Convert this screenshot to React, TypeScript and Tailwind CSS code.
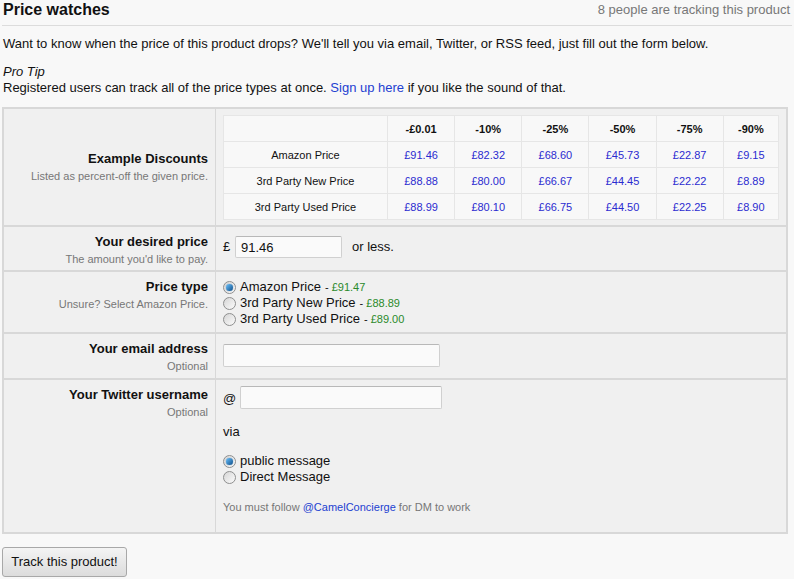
import React from "react";

const columns = ["-£0.01", "-10%", "-25%", "-50%", "-75%", "-90%"];

const discounts = [
  { name: "Amazon Price", prices: ["£91.46", "£82.32", "£68.60", "£45.73", "£22.87", "£9.15"] },
  { name: "3rd Party New Price", prices: ["£88.88", "£80.00", "£66.67", "£44.45", "£22.22", "£8.89"] },
  { name: "3rd Party Used Price", prices: ["£88.99", "£80.10", "£66.75", "£44.50", "£22.25", "£8.90"] },
];

function Radio({ checked }: { checked?: boolean }) {
  return (
    <span className="mr-[4px] inline-flex h-[13px] w-[13px] shrink-0 items-center justify-center rounded-full border border-[#8e8f8f] bg-gradient-to-br from-[#d6d6d6] to-[#fbfbfb]">
      {checked && (
        <span className="h-[7px] w-[7px] rounded-full bg-gradient-to-br from-[#6cc4ff] to-[#0b4f8a] shadow-[0_0_1px_#1b5e99]" />
      )}
    </span>
  );
}

function FieldLabel({ title, hint }: { title: string; hint: string }) {
  return (
    <div className="text-right">
      <div className="text-[13px] font-bold leading-[16px] text-[#111]">{title}</div>
      <div className="mt-px text-[11px] leading-[16px] text-[#777]">{hint}</div>
    </div>
  );
}

export default function App() {
  return (
    <div
      className="min-h-[579px] bg-[#f8f8f8] px-[2px] pt-px text-[13px] leading-[16px] text-[#111]"
      style={{ fontFamily: '"Liberation Sans", Arial, sans-serif' }}
    >
      <div className="flex items-center justify-between border-b border-[#dcdcdc] pb-[6px] pl-px pr-[2px]">
        <h1 className="text-[16px] font-bold leading-[18px]">Price watches</h1>
        <span className="text-[13px] text-[#777]">8 people are tracking this product</span>
      </div>

      <p className="mt-[10px] pl-px">
        Want to know when the price of this product drops? We'll tell you via email, Twitter, or RSS feed, just fill out the form below.
      </p>
      <p className="mt-[12px] pl-px">
        <em>Pro Tip</em>
        <br />
        Registered users can track all of the price types at once.{" "}
        <a className="text-[#1d3fd1]">Sign up here</a> if you like the sound of that.
      </p>

      <div className="mr-[4px] mt-[11px] border-2 border-[#d8d8d8] bg-[#f0f0f0]">
        {/* Example discounts */}
        <div className="flex h-[116px]">
          <div className="flex w-[212px] shrink-0 items-center justify-end border-r border-[#d8d8d8] pr-[7px]">
            <FieldLabel title="Example Discounts" hint="Listed as percent-off the given price." />
          </div>
          <div className="flex-1 px-[7px] pt-[6px]">
            <table className="w-[556px] border-collapse bg-[#f8f8f8] text-[11px] leading-[14px]">
              <thead>
                <tr className="h-[26px]">
                  <th className="w-[164px] border border-[#e6e6e6]" />
                  {columns.map((c) => (
                    <th key={c} className="border border-[#e6e6e6] font-bold">
                      {c}
                    </th>
                  ))}
                </tr>
              </thead>
              <tbody>
                {discounts.map((row) => (
                  <tr key={row.name} className="h-[26px]">
                    <td className="border border-[#e6e6e6] text-center">{row.name}</td>
                    {row.prices.map((p, i) => (
                      <td key={i} className="border border-[#e6e6e6] text-center text-[#2b2bd0]">
                        {p}
                      </td>
                    ))}
                  </tr>
                ))}
              </tbody>
            </table>
          </div>
        </div>

        {/* Desired price */}
        <div className="flex h-[45px] border-t-2 border-[#d8d8d8]">
          <div className="w-[212px] shrink-0 border-r border-[#d8d8d8] pr-[7px] pt-[7px]">
            <FieldLabel title="Your desired price" hint="The amount you'd like to pay." />
          </div>
          <div className="flex items-start pl-[7px] pt-[9px]">
            <span className="mt-[3px] w-[12px]">£</span>
            <input
              defaultValue="91.46"
              className="h-[22px] w-[107px] rounded-[2px] border border-[#d0d0d0] border-t-[#b8b8b8] bg-[#fafafa] px-[5px] text-[13px] outline-none"
            />
            <span className="ml-[10px] mt-[3px]">or less.</span>
          </div>
        </div>

        {/* Price type */}
        <div className="flex h-[62px] border-t-2 border-[#d8d8d8]">
          <div className="w-[212px] shrink-0 border-r border-[#d8d8d8] pr-[7px] pt-[7px]">
            <FieldLabel title="Price type" hint="Unsure? Select Amazon Price." />
          </div>
          <div className="pl-[7px] pt-[7px]">
            {[
              ["Amazon Price", "£91.47", true],
              ["3rd Party New Price", "£88.89", false],
              ["3rd Party Used Price", "£89.00", false],
            ].map(([name, price, checked]) => (
              <div key={name as string} className="flex h-[16px] items-center">
                <Radio checked={checked as boolean} />
                <span>{name}</span>
                <span className="ml-[4px] text-[11px] text-[#2a8a2a]">
                  <span className="text-[#111]">- </span>
                  {price}
                </span>
              </div>
            ))}
          </div>
        </div>

        {/* Email */}
        <div className="flex h-[46px] border-t-2 border-[#d8d8d8]">
          <div className="w-[212px] shrink-0 border-r border-[#d8d8d8] pr-[7px] pt-[7px]">
            <FieldLabel title="Your email address" hint="Optional" />
          </div>
          <div className="pl-[7px] pt-[10px]">
            <input className="h-[23px] w-[217px] rounded-[2px] border border-[#d0d0d0] border-t-[#b8b8b8] bg-[#fafafa] px-[5px] outline-none" />
          </div>
        </div>

        {/* Twitter */}
        <div className="flex h-[154px] border-t-2 border-[#d8d8d8]">
          <div className="w-[212px] shrink-0 border-r border-[#d8d8d8] pr-[7px] pt-[7px]">
            <FieldLabel title="Your Twitter username" hint="Optional" />
          </div>
          <div className="pl-[7px] pt-[6px]">
            <div className="flex items-center">
              <span className="mt-[3px] w-[17px]">@</span>
              <input className="h-[23px] w-[202px] rounded-[2px] border border-[#d0d0d0] border-t-[#b8b8b8] bg-[#fafafa] px-[5px] outline-none" />
            </div>
            <div className="mt-[15px]">via</div>
            <div className="mt-[13px]">
              <div className="flex h-[16px] items-center">
                <Radio checked />
                <span>public message</span>
              </div>
              <div className="flex h-[16px] items-center">
                <Radio />
                <span>Direct Message</span>
              </div>
            </div>
            <div className="mt-[14px] text-[11px] text-[#777]">
              You must follow <a className="text-[#1d3fd1]">@CamelConcierge</a> for DM to work
            </div>
          </div>
        </div>
      </div>

      <button className="mt-[13px] h-[30px] w-[125px] rounded-[3px] border border-[#a8a8a8] bg-gradient-to-b from-[#f4f4f4] to-[#dcdcdc] text-[13px] text-[#111]">
        Track this product!
      </button>
    </div>
  );
}
